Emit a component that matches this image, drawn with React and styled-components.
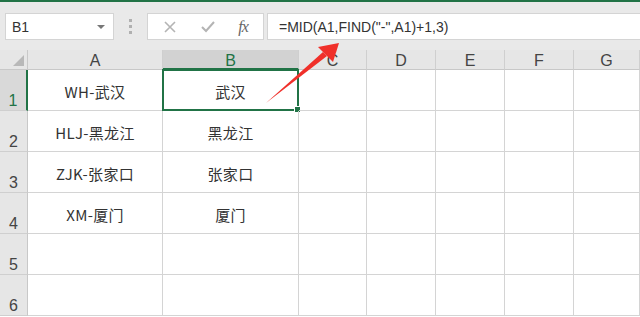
import React from "react";
import styled, { createGlobalStyle } from "styled-components";

const Global = createGlobalStyle`
  html, body { margin: 0; padding: 0; background: #fff; overflow: hidden; }
  body { font-family: "Liberation Sans", "Noto Sans CJK SC", sans-serif; }
`;

const Page = styled.div`
  position: relative;
  width: 640px;
  height: 317px;
  overflow: hidden;
  background: #fff;
`;

const Toolbar = styled.div`
  border-top: 2px solid #217346;
  height: 50px;
  box-sizing: border-box;
  background: #e9e9e9;
  display: flex;
  align-items: flex-start;
  padding: 11px 0 0 5px;
`;

const NameBox = styled.div`
  width: 109px;
  height: 27px;
  box-sizing: border-box;
  background: #fff;
  border: 1px solid #d4d4d4;
  display: flex;
  align-items: center;
  justify-content: space-between;
  padding: 0 8px 0 6px;
  font-size: 14px;
  color: #333;
`;

const Caret = styled.span`
  width: 0;
  height: 0;
  border-left: 4px solid transparent;
  border-right: 4px solid transparent;
  border-top: 4px solid #777;
`;

const Grip = styled.div`
  width: 33px;
  height: 27px;
  display: flex;
  flex-direction: column;
  align-items: center;
  justify-content: center;
  gap: 3px;
  span {
    width: 3px;
    height: 3px;
    background: #b0b0b0;
  }
`;

const FuncBox = styled.div`
  width: 117px;
  height: 27px;
  box-sizing: border-box;
  background: #fff;
  border: 1px solid #d4d4d4;
  display: flex;
  align-items: center;
  justify-content: space-around;
  padding: 0 4px;
`;

const FxLabel = styled.span`
  font-family: "Liberation Serif", serif;
  font-style: italic;
  font-size: 16px;
  color: #666;
  letter-spacing: -1px;
`;

const FormulaBox = styled.div`
  flex: 1;
  height: 27px;
  margin-left: 3px;
  box-sizing: border-box;
  background: #fff;
  border: 1px solid #d4d4d4;
  border-right: none;
  display: flex;
  align-items: center;
  padding-left: 11px;
  font-size: 14px;
  color: #333;
`;

const Sheet = styled.div`
  display: grid;
  grid-template-columns: 28px 135px 136px 68px 69px 69px 69px 66px;
  grid-template-rows: 20px repeat(6, 41px);
`;

const Corner = styled.div`
  position: relative;
  background: #e6e6e6;
  border-right: 1px solid #c8c8c8;
  border-bottom: 1px solid #c8c8c8;
  &::after {
    content: "";
    position: absolute;
    right: 3px;
    bottom: 3px;
    border-left: 11px solid transparent;
    border-bottom: 11px solid #b8b8b8;
  }
`;

const ColHead = styled.div`
  background: ${(p) => (p.$active ? "#d2d2d2" : "#e6e6e6")};
  border-right: 1px solid #cfcfcf;
  border-bottom: ${(p) => (p.$active ? "2px solid #217346" : "1px solid #c8c8c8")};
  display: flex;
  align-items: center;
  justify-content: center;
  padding-top: 3px;
  box-sizing: border-box;
  font-size: 16px;
  color: ${(p) => (p.$active ? "#217346" : "#444")};
`;

const RowHead = styled.div`
  background: ${(p) => (p.$active ? "#d9d9d9" : "#e6e6e6")};
  border-right: ${(p) => (p.$active ? "2px solid #217346" : "1px solid #c8c8c8")};
  border-bottom: 1px solid #cfcfcf;
  box-sizing: border-box;
  display: flex;
  align-items: flex-end;
  justify-content: center;
  padding-bottom: 0;
  font-size: 16px;
  line-height: 18px;
  color: ${(p) => (p.$active ? "#217346" : "#444")};
`;

const Cell = styled.div`
  position: relative;
  box-sizing: border-box;
  border-right: 1px solid #d4d4d4;
  border-bottom: 1px solid #d4d4d4;
  display: flex;
  align-items: center;
  justify-content: center;
  padding-top: 3px;
  font-size: 15px;
  letter-spacing: 0.3px;
  color: #333;
  white-space: nowrap;
  font-family: "Noto Sans CJK SC", "Liberation Sans", sans-serif;
  ${(p) =>
    p.$selected &&
    `
    border: 2px solid #217346;
    margin: -1px 0 0 -1px;
    width: calc(100% + 1px);
    &::after {
      content: "";
      position: absolute;
      right: -4px;
      bottom: -4px;
      width: 5px;
      height: 5px;
      background: #217346;
      border: 1px solid #fff;
    }
  `}
`;

const Arrow = styled.svg`
  position: absolute;
  left: 0;
  top: 0;
  pointer-events: none;
`;

const cols = ["A", "B", "C", "D", "E", "F", "G"];
const rows = [
  ["WH-武汉", "武汉"],
  ["HLJ-黑龙江", "黑龙江"],
  ["ZJK-张家口", "张家口"],
  ["XM-厦门", "厦门"],
  ["", ""],
  ["", ""],
];

export default function App() {
  return (
    <Page>
      <Global />
      <Toolbar>
        <NameBox>
          B1
          <Caret />
        </NameBox>
        <Grip>
          <span />
          <span />
          <span />
        </Grip>
        <FuncBox>
          <svg width="14" height="14" viewBox="0 0 14 14">
            <path d="M2 2L12 12M12 2L2 12" stroke="#b4b4b4" strokeWidth="1.6" />
          </svg>
          <svg width="16" height="14" viewBox="0 0 16 14">
            <path d="M2 7L6 11L14 2" stroke="#b4b4b4" strokeWidth="2" fill="none" />
          </svg>
          <FxLabel>fx</FxLabel>
        </FuncBox>
        <FormulaBox>=MID(A1,FIND("-",A1)+1,3)</FormulaBox>
      </Toolbar>
      <Sheet>
        <Corner />
        {cols.map((c) => (
          <ColHead key={c} $active={c === "B"}>
            {c}
          </ColHead>
        ))}
        {rows.map((r, i) => (
          <React.Fragment key={i}>
            <RowHead $active={i === 0}>{i + 1}</RowHead>
            <Cell>{r[0]}</Cell>
            <Cell $selected={i === 0}>{r[1]}</Cell>
            {cols.slice(2).map((c) => (
              <Cell key={c} />
            ))}
          </React.Fragment>
        ))}
      </Sheet>
      <Arrow width="640" height="317">
        <polygon points="266,103 327,56 323,52" fill="#f0302a" />
        <polygon points="339,43 318,47 333,62" fill="#f0302a" />
      </Arrow>
    </Page>
  );
}
